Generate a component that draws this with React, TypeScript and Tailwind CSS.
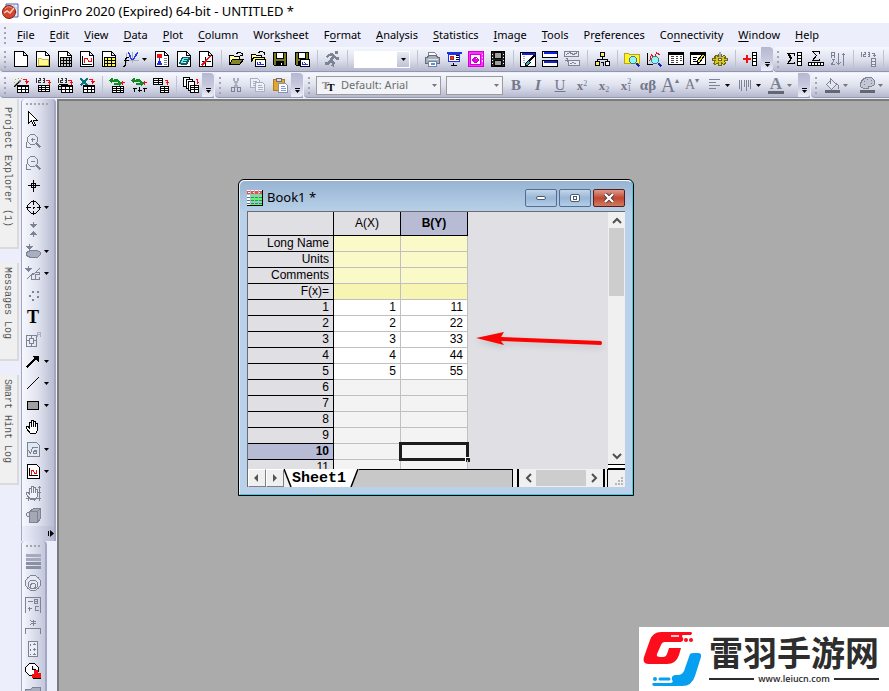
import { ReactNode } from "react";

// [path, stroke, fill, stroke width]
type Shape = [string, string, string?, number?];

const K = "#000000";
const G = "#7d8294";
const L = "#a9afbf";
const R = "#f01010";

const page: Shape = ["M1 0H10L14 4V15H1Z M10 0V4H14", K, "#ffffff"];
const redArrow: Shape = ["M9 2H13V6 M11 4H15 M12 5H14", R];
const grid: Shape = ["M4 8H15V15H4Z M4 9H15 M4 12H15 M8 8V15 M12 8V15", K, "#ffffff"];
const digits: Shape = ["M0 1H1V5 M3 1H5V3H3V5H5 M7 1H9V5H7 M7 3H9", "#333333"];
const recycle: Shape[] = [
  ["M1 3H9 M3 1L1 3L3 5 M4 2H8 M4 6H11 M9 4L11 6L9 8", "#118a22", "none", 2],
];
const lens: Shape[] = [
  ["M7 5H10L12 7V10L10 12H7L5 10V7Z", "#38808c", "#8ef4f8"],
  ["M12 12L15 15", "#1020b0", "none", 2],
];
const floppy: Shape[] = [
  ["M1 1H14V14H2L1 13Z", K, "#777722"],
  ["M4 1H11V7H4Z", K, "#ffffff"],
  ["M4 10H11V14H4Z M5 11H8V13H5Z", K, K],
  ["M9 11V13", "#ffffff"],
];
const hand = "M5 14L1 9V7H3L4 9V3H6V7V1H8V7V2H10V7V4H12V11L10 14Z";

const icons: Record<string, Shape[]> = {
  Project: [page],
  Folder: [page, ["M3 7H6L7 8H13V14H3Z", "#c9b93c", "#fff890"]],
  Workbook: [page, ["M3 6H14V15H3Z M3 9H14 M3 12H14 M6 6V15 M9 6V15 M12 6V15", K, "#c6c6c6"]],
  Graph: [page, ["M3 4V13H12 M2 7H3 M2 10H3", K], ["M5 11V7H8L9 10H12V6", R]],
  Matrix: [page, ["M3 6H14V15H3Z M3 9H14 M3 12H14 M6 6V15 M10 6V15", K, "#fff64a"]],
  Function: [
    ["M3 1V11 M9 0V11 M1 9H15", L],
    ["M5 1L8 8H10L14 1", "#2438e8", "none", 1.5],
    ["M5 6H3L2 8V14L0 15 M0 9H5", K, "none", 1.5],
  ],
  Layout: [
    page,
    ["M3 3H7V6H3Z", R, R],
    ["M3 13L5 8L7 13Z", "#2030d8", "#2030d8"],
    ["M9 7H12 M9 9H12 M9 11H12 M9 13H12", G],
  ],
  Notes: [page, ["M3 12L6 6H13L10 12Z M4 13H10L13 8", "#0b5d66", "#6deaee"], ["M7 8H11 M6 10H10", "#0b5d66"]],
  "Function plot": [page, ["M3 10H12 M7 5V14", K], ["M3 14L6 11L8 9L12 4", R, "none", 1.5]],
  Open: [
    ["M1 13V4H5L6 5H11V8", K, "#ffffa0"],
    ["M1 13L4 8H15L11 13Z", K, "#85852a"],
    ["M8 2L10 1H12L14 3 M14 1V4H11", K],
  ],
  "Open template": [
    ["M1 10V3H5L6 4H11V7", K, "#ffffa0"],
    ["M8 1L10 0H12L14 2 M14 0V3", K],
    ["M1 10L3 6H14V9", K, "#ffff50"],
    ["M5 8H15V15H5Z", K, "#ffffff"],
    ["M7 10V13H13 M9 11L11 12", "#2030e0"],
  ],
  Save: floppy,
  "Save template": [...floppy, ["M6 8H15V15H6Z", K, "#ffffff"], ["M8 10V13H13 M10 11L12 13", "#2030e0"]],
  Run: [
    ["M11 0H13V2H11Z", G, G],
    ["M5 3H8L10 5L12 7H14 M9 5L6 9L9 11L8 15 M6 9L4 12H0 M5 3L2 6", G, "none", 2.5],
  ],
  Print: [
    ["M4 5V1H10L12 3V5", G, "#ffffff"],
    ["M1 6H3L4 4H12L13 6H15V12H1Z", "#686d7b", "#a9aebb"],
    ["M3 8H13", "#dfe2ea"],
    ["M4 10H12V15H4Z", G, "#ffffff"],
    ["M6 12H10", "#399cf0", "none", 2],
  ],
  Slides: [
    ["M0 1H15", "#2030e8", "none", 2],
    ["M2 3H13V10H2Z", "#2030e8", "#ffffff"],
    ["M4 5H7V8H4Z", R, "#16a832"],
    ["M9 4H12 M9 6H12 M9 8H12 M7 11V14 M4 14H10", K],
  ],
  Digitizer: [
    ["M0 0H15V15H0Z", "#d200d2", "#ff30ff"],
    ["M2 3H12V13H2Z", "#d200d2", "#ffffff"],
    ["M6 6H8L10 8V9L8 11H6L4 9V8Z", "#c000c0", "#e800e8"],
    ["M7 7H8", "#ffffff"],
    ["M14 2V3 M14 5V6 M14 8V10", "#ffffff"],
  ],
  Video: [
    ["M1 0H14V15H1Z", K, "#222222"],
    ["M4 1H11V7H4Z M4 9H11V14H4Z", K, "#a0a0a0"],
    ["M2 2V3 M2 5V6 M2 8V9 M2 11V12 M13 2V3 M13 5V6 M13 8V9 M13 11V12", "#ffffff"],
  ],
  "Code builder": [
    ["M0 1H15V15H0Z", K, "#ffffff"],
    ["M1 2H14", "#1020e0", "none", 2],
    ["M2 5H4 M2 7H4 M2 9H4 M2 11H4", L],
    ["M14 4L8 10", K, "none", 2],
    ["M8 9L5 12V14H7L10 11Z", K, "#20b0b8"],
  ],
  Windows: [
    ["M0 0H15V6H0Z M0 9H15V15H0Z", K, "#ffffff"],
    ["M1 1H14 M1 10H14", "#1020e0", "none", 2],
  ],
  Duplicate: [
    ["M0 0H14V5H0Z M4 9H15V14H4Z M0 9H3", G, "#e8ebf4"],
    ["M2 3L5 1L9 3L13 1 M6 12L9 11L12 13 M1 7H3V10", G],
  ],
  Explorer: [
    ["M6 1H10V5H6Z", K, "#ffee60"],
    ["M8 5V8 M3 10V8H13V10 M1 10H5V14H1Z M11 10H15V14H11Z M6 11H9V14", K],
    ["M2 11H4V13H2Z", "#ffee60", "#ffee60"],
    ["M12 11H14V13H12Z", "#ffffff", "#ffffff"],
  ],
  "Zoom project": [["M0 2H4L5 3H15V12H0Z", "#b6a41c", "#fff42c"], ...lens],
  "Zoom graph": [["M1 1V13H6 M0 4H1 M0 7H1 M0 10H1", K], ["M3 10L5 3L8 7L10 1L14 4", R], ...lens],
  Results: [
    ["M0 1H15V13H0Z", K, "#ffffff"],
    ["M0 2H15", K, "none", 2],
    ["M2 5H5 M7 5H9 M11 5H13 M2 7H5 M7 7H9 M11 7H13 M2 9H5 M7 9H9 M11 9H13 M2 11H5 M7 11H9", "#444444"],
  ],
  Script: [
    ["M0 1H15V13H0Z", K, "#ffffff"],
    ["M0 2H15", K, "none", 2],
    ["M2 6H6 M2 8H5 M2 10H6", K],
    ["M13 4L8 10", "#f4e020", "none", 3],
    ["M12 3L7 9V12L9 11L14 4", K],
  ],
  Options: [
    ["M6 3H9V5L12 4L13 5L12 7H15V9H12L13 12L11 13L9 11V14H6V11L3 13L1 12L3 9H0V7H3L2 5L4 4L6 5Z", "#6e6718", "#d8c820"],
    ["M6 7H9V9H6Z", "#6e6718", "#ffffff"],
    ["M7 0V6", "#a8acb8", "none", 2],
  ],
  "Add column": [["M0 7H8 M4 3V11", R, "none", 2], ["M10 1H14V14H10Z M10 4H14 M10 7H14 M10 10H14", K, "#ffffff"]],
  "Column statistics": [
    ["M8 4V2H1L5 7L1 12H8V10", K],
    ["M2 3L5 7", K, "none", 2],
    ["M11 1H15V14H11Z M11 4H15 M11 7H15 M11 10H15", K, "#ffffff"],
  ],
  "Row statistics": [
    ["M11 2V0H4L8 4L4 9H11V7 M5 1L8 4", K],
    ["M0 11H15V14H0Z M3 11V14 M6 11V14 M9 11V14 M12 11V14", K, "#ffffff"],
  ],
  Sort: [
    ["M1 6V1H4V6 M1 4H4 M1 8H4L1 13H4 M8 1V13 M6 11L8 13L10 11 M13 14V2 M11 4L13 2L15 4", G],
  ],
  "Set values": [
    ["M0 1H1V5 M3 1H5V3H3V5H5 M7 1H9V5H7 M7 3H9 M11 2H14V5 M12 4H15", G],
    ["M11 7H15V15H11Z M11 10H15 M11 13H15", G, "#e8ebf4"],
  ],
  "Import wizard": [
    ["M1 9L7 3", "#777777", "none", 2],
    ["M5 0V1 M2 2L3 3 M8 1L7 2 M3 5H4 M0 5H1", "#cba800"],
    ["M0 10L5 5", K],
    redArrow,
    grid,
  ],
  "Import single ASCII": [digits, ["M10 3H14V7 M12 5H15", R], ["M3 8H14V14H3Z M3 10H14 M3 12H14 M6 8V14 M10 8V14", K, "#ffffff"]],
  "Import multiple ASCII": [digits, ["M10 3H14V7 M12 5H15", R], ["M1 7H10V12 M1 7V12H4 M1 9H5", K], grid],
  "Import Excel": [["M1 1L8 8 M8 1L1 8", "#087878", "none", 2.5], redArrow, grid],
  Reimport: [...recycle, ["M13 3V7 M11 5H15", R], ["M3 9H14V15H3Z M3 11H14 M3 13H14 M7 9V15 M11 9V15", K, "#ffffff"]],
  "Reimport all": [...recycle, ["M13 3V7 M11 5H15", R], ["M3 14V10 M1 11H5 M8 9V14 M6 13H10 M13 14V10 M11 11H15", K]],
  Transpose: [
    ["M0 1H9V7H0Z M0 3H9 M0 5H9 M5 1V7", K, "#ffffff"],
    ["M11 3H14V7 M12 5H15", R],
    ["M7 9H15V15H7Z M7 11H15 M7 13H15 M11 9V15", K, "#ffffff"],
  ],
  Batch: [
    ["M0 0H6V9H0Z", K, "#ffffff"],
    ["M3 2H9V11H3Z", K, "#ffffff"],
    ["M5 4H11V13H5Z", K, "#ffffff"],
    ["M12 2H14V6 M13 5H15", R],
    ["M7 8H15V15H7Z M7 10H15 M7 12H15 M11 8V15", K, "#ffffff"],
  ],
  Cut: [["M5 1L9 10 M10 1L6 10", L, "none", 2], ["M3 10H6V14H3Z M9 10H12V14H9Z", G, "none", 1.5]],
  Copy: [
    ["M0 1H7L9 3V10H0Z M2 4H6 M2 6H7 M2 8H7", L, "#eef1fa"],
    ["M5 5H12L14 7V14H5Z M7 8H11 M7 10H12 M7 12H12", L, "#eef1fa"],
  ],
  Paste: [
    ["M1 2H12V13H1Z", "#b07a18", "#e0a832"],
    ["M4 1H9V4H4Z", "#6e6e78", "#d8d8e0"],
    ["M6 6H13L15 8V15H6Z", "#8892b0", "#ffffff"],
    ["M8 9H12 M8 11H13 M8 13H13", "#7f9bd0"],
  ],
  Align: [["M2 2H13 M2 5H9 M2 8H13 M2 11H9", G]],
  "Line spacing": [["M2 2V11 M4 2V13 M7 2V9 M9 2V13 M11 2V9 M13 2V11", G]],
  Fill: [["M2 7L7 2L12 7L7 12Z M6 0V6", G, "#e3e6ef"], ["M12 6L14 8V11", G], ["M0 14H15", "#63676f", "none", 3]],
  Palette: [
    ["M1 6L3 2L7 0H12L15 3V7L12 9H9V11H4L1 9Z", G, "#c3c7d3"],
    ["M4 4H5 M7 2H8 M11 3H12 M4 7H5 M11 6H12", G],
    ["M0 14H15", "#63676f", "none", 3],
  ],
  Pointer: [["M3 0V12L6 9L8 14H10L8 9H12Z", K, "#ffffff"]],
  "Zoom in": [["M5 1H9L12 4V8L9 11H5L2 8V4Z M5 6H9 M7 4V8 M1 8V14H5", G], ["M11 10L15 14", G, "none", 2]],
  "Zoom out": [["M5 1H9L12 4V8L9 11H5L2 8V4Z M5 6H9 M1 8V14H5", G], ["M11 10L15 14", G, "none", 2]],
  "Screen reader": [["M8 2V14 M2 8H14 M6 6H10V10H6Z", K]],
  "Data reader": [["M6 2H10L14 6V10L10 14H6L2 10V6Z M8 0V5 M8 11V15 M0 8H5 M11 8H15 M7 8H9 M8 7V9", K]],
  "Data selector": [["M8 0V4 M8 12V16", G], ["M5 3H11L8 6Z M5 13H11L8 10Z", G, G]],
  "Mask range": [["M4 0V3", G], ["M1 3H7L4 6Z", G, G], ["M5 7H12L15 9V11L12 14H5L1 12V9Z", G, L]],
  "Mask points": [["M3 0V5 M1 14L5 10L9 8L14 3 M6 8H9 M6 8V14H9 M10 7H14V9H10V14H14V11", G], ["M0 3H6L3 6Z", G, G]],
  "Draw data": [["M6 4H8 M11 4H13 M3 8H5 M11 9H13 M6 12H8", G, "none", 2]],
  Annotation: [
    ["M1 4H11V15H1Z M1 9H4 M8 9H11 M6 4V7 M6 12V15 M4 7V12H8V7Z", G],
    ["M12 5V1H15V5 M12 3H15", L],
  ],
  Arrow: [["M1 14L11 4", K, "none", 2], ["M8 3H13V8Z", K, K]],
  Line: [["M1 14L13 2", K, "none", 1.4]],
  Rectangle: [["M2 4H13V12H2Z", K, "#a0a0a0"]],
  Pan: [[hand, K, "#ffffff"]],
  Equation: [["M2 1H11L14 4V15H2Z", G, "#dfe7f1"], ["M3 9L5 12L7 6H12 M8 9H11V12H8V10H11", G]],
  "New graph": [["M2 1H11L14 4V15H2Z", K, "#ffffff"], ["M4 4V12H12 M3 7H4 M3 10H4", K], ["M6 11V7H8L9 10H11V6", R]],
  Rescale: [[hand, G, "#f0f2f8"], ["M14 0V15 M12 2H15 M12 7H15 M0 13H15 M3 12V15 M9 12V15", G]],
  Rotate: [["M4 4L8 1H15V11L12 15H4Z", G, "#a3a8b5"], ["M4 4H12V15 M12 4L15 1", G], ["M1 6L4 4V10L1 8Z", G, "#dfe2ea"]],
  Layers: [["M0 2H15 M0 6H15", "#a4aabc", "none", 3], ["M0 10H15 M0 14H15", "#8b91a5", "none", 3]],
  Radial: [
    ["M0 7.5A7.5 7.5 0 1 1 15 7.5A7.5 7.5 0 1 1 0 7.5Z", G, "#e4e9f2"],
    ["M3 9A4.5 4.5 0 1 1 12 9A4.5 4.5 0 1 1 3 9Z", G],
    ["M5 10.5A2.5 2.5 0 1 1 10 10.5A2.5 2.5 0 1 1 5 10.5Z", G],
  ],
  Legend: [["M0 15V0H15V15 M2 4H7 M2 11H6 M4 9V13 M9 2H12V6H9Z M9 4H12 M13 9H10V13H13", G]],
  Bracket: [["M0 14V9H15V14 M8 0V6 M5 1L11 5 M5 5L11 1", G]],
  Scale: [["M3 0H12V15H3Z M5 2V4 M5 7V9 M5 12V13 M7 3H10 M7 8H10 M7 13H10 M9 1V3 M9 6V9 M9 11V13", G, "#eceff7"]],
  Timestamp: [
    ["M4 0H9L13 4V8L9 12H4L0 8V4Z M7 2V6H10", K, "#ffffff"],
    ["M9 7H12V10H15V14H7V11H9Z", R, R],
    ["M7 15H15", K],
  ],
  "Open folder": [["M0 4H5L7 2H15V14H0Z", G, L]],
};

function Icon({ name }: { name: string }) {
  return (
    <svg className="size-4 shrink-0" viewBox="0 0 16 16" shapeRendering="crispEdges" aria-hidden="true">
      <g transform="translate(.5 .5)">
        {icons[name].map(([d, stroke, fill = "none", width = 1], i) => (
          <path key={i} d={d} stroke={stroke} fill={fill} strokeWidth={width} />
        ))}
      </g>
    </svg>
  );
}

function Tool({ name, children }: { name: string; children?: ReactNode }) {
  return (
    <button aria-label={name} className="flex h-[22px] w-[22px] shrink-0 items-center justify-center">
      {children ?? <Icon name={name} />}
    </button>
  );
}

function Tools({ names }: { names: string[] }) {
  return (
    <>
      {names.map((name) => (
        <Tool key={name} name={name} />
      ))}
    </>
  );
}

function Caret({ color = "#000000" }: { color?: string }) {
  return (
    <svg className="h-[3px] w-[5px] shrink-0" viewBox="0 0 5 3" aria-hidden="true">
      <path d="M0 0H5L2.5 3Z" fill={color} />
    </svg>
  );
}

function Drop({ color }: { color?: string }) {
  return (
    <button aria-label="More" className="flex h-[22px] w-[9px] shrink-0 items-center">
      <Caret color={color} />
    </button>
  );
}

function Sep() {
  return (
    <div className="flex w-2 shrink-0 justify-center">
      <div className="h-[18px] w-px bg-[#bfc2d2]" />
    </div>
  );
}

function Grip() {
  return (
    <div className="flex w-2.5 shrink-0 flex-col items-center gap-[3px]">
      {[0, 1, 2, 3].map((i) => (
        <i key={i} className="size-[2px] bg-[#a2a4b0]" />
      ))}
    </div>
  );
}

function Bar({ children, end = true, grow = false }: { children: ReactNode; end?: boolean; grow?: boolean }) {
  return (
    <div
      className={
        "flex h-[25px] shrink-0 items-center rounded-l-sm border-b border-[#9496ab] bg-linear-to-b from-[#f5f8fe] via-[#e0e3ee] to-[#b6b9cf]" +
        (grow ? " flex-1" : "")
      }
    >
      <Grip />
      {children}
      {end && (
        <button
          aria-label="Toolbar options"
          className="flex h-[24px] w-3 flex-col items-center justify-end gap-px rounded-r-sm bg-linear-to-b from-[#b4b7cf] via-[#c6c9dd] to-[#eceefa] pb-1"
        >
          <span className="h-px w-[5px] bg-black" />
          <Caret />
        </button>
      )}
    </div>
  );
}

const menus: [string, number][] = [
  ["File", 0], ["Edit", 0], ["View", 0], ["Data", 0], ["Plot", 0], ["Column", 0],
  ["Worksheet", 3], ["Format", 1], ["Analysis", 0], ["Statistics", 0], ["Image", 0],
  ["Tools", 0], ["Preferences", 2], ["Connectivity", 2], ["Window", 0], ["Help", 0],
];

function TitleBar() {
  return (
    <header className="flex h-[23px] shrink-0 items-center gap-1 bg-white pl-0.5">
      <svg className="size-[17px]" viewBox="0 0 17 17" aria-hidden="true">
        <path d="M4 1H16V14H4Z" fill="#e8eefc" stroke="#5060a8" />
        <path d="M8 1V14M12 1V14M4 5H16M4 9H16" stroke="#a9b4dc" />
        <circle cx="7" cy="9" r="6.5" fill="#d8452e" stroke="#7c2018" />
        <path d="M2 10L5 8L8 10L12 5" fill="none" stroke="#ffd0c0" strokeWidth="1.5" />
        <path d="M3 6Q6 2 10 5" fill="none" stroke="#f09a84" />
      </svg>
      <h1 className="text-[13px] whitespace-nowrap">OriginPro 2020 (Expired) 64-bit - UNTITLED *</h1>
    </header>
  );
}

function MenuBar() {
  return (
    <nav className="flex h-6 shrink-0 items-center">
      <Grip />
      <div className="flex gap-[15px] pl-[7px]">
        {menus.map(([label, key]) => (
          <button key={label} className="text-[11px] leading-4 whitespace-nowrap">
            {label.slice(0, key)}
            <u className="underline-offset-2">{label[key]}</u>
            {label.slice(key + 1)}
          </button>
        ))}
      </div>
    </nav>
  );
}

function MainToolbar() {
  return (
    <div className="flex h-[26px] shrink-0">
      <Bar>
        <Tools names={["Project", "Folder", "Workbook", "Graph", "Matrix", "Function"]} />
        <Drop />
        <Tools names={["Layout", "Notes", "Function plot"]} />
        <Sep />
        <Tools names={["Open", "Open template", "Save", "Save template"]} />
        <Sep />
        <Tool name="Run" />
        <Sep />
        <div className="relative mx-[3px] flex w-14 items-center">
          <select aria-label="Zoom level" className="h-[17px] w-full appearance-none border border-white bg-white">
            <option></option>
          </select>
          <span className="pointer-events-none absolute top-px right-px flex h-[15px] w-3 items-center justify-center bg-linear-to-b from-[#e8eaf3] to-[#bfc3d6]">
            <Caret />
          </span>
        </div>
        <Sep />
        <Tools names={["Print", "Slides", "Digitizer", "Video"]} />
        <Sep />
        <Tools names={["Code builder", "Windows", "Duplicate"]} />
        <Sep />
        <Tool name="Explorer" />
        <Sep />
        <Tools names={["Zoom project", "Zoom graph", "Results", "Script", "Options"]} />
        <Sep />
        <Tool name="Add column" />
      </Bar>
      <Bar end={false} grow>
        <Tools names={["Column statistics", "Row statistics", "Sort"]} />
        <Sep />
        <Tool name="Set values" />
        <Sep />
      </Bar>
    </div>
  );
}

function FormatToolbar() {
  return (
    <div className="flex h-[26px] shrink-0 gap-px">
      <Bar>
        <Tools names={["Import wizard", "Import single ASCII", "Import multiple ASCII", "Import Excel"]} />
        <Sep />
        <Tools names={["Reimport", "Reimport all", "Transpose"]} />
        <Sep />
        <Tool name="Batch" />
      </Bar>
      <Bar>
        <Tools names={["Cut", "Copy", "Paste"]} />
      </Bar>
      <Bar>
        <div className="relative ml-0.5 w-[125px]">
          <select
            aria-label="Font"
            className="block h-[19px] w-full appearance-none border border-[#9b9b9b] bg-[#f1f3f8] pl-6 text-[11px] leading-4 text-[#6d6d6d]"
          >
            <option>Default: Arial</option>
          </select>
          <span className="pointer-events-none absolute inset-y-0 left-1.5 flex items-center font-['Liberation_Serif',serif] text-[11px] font-bold">
            <span className="text-[#888888]">T</span>
            <span className="-ml-0.5 pt-1">T</span>
          </span>
          <span className="pointer-events-none absolute inset-y-0 right-1 flex items-center">
            <Caret color="#777777" />
          </span>
        </div>
        <div className="relative mr-0.5 ml-[5px] w-[57px]">
          <select aria-label="Font size" className="block h-[19px] w-full appearance-none border border-[#9b9b9b] bg-[#f1f3f8]">
            <option></option>
          </select>
          <span className="pointer-events-none absolute inset-y-0 right-1 flex items-center">
            <Caret color="#777777" />
          </span>
        </div>
        <div className="flex font-['Liberation_Serif',serif] text-[#74788a]">
          <Tool name="Bold"><b className="text-[15px]">B</b></Tool>
          <Tool name="Italic"><b className="text-[15px] italic">I</b></Tool>
          <Tool name="Underline"><span className="text-[15px] underline">U</span></Tool>
          <Tool name="Superscript"><b className="text-[13px] leading-none">x<sup className="text-[8px] font-normal">2</sup></b></Tool>
          <Tool name="Subscript"><b className="text-[13px] leading-none">x<sub className="text-[8px] font-normal">2</sub></b></Tool>
          <Tool name="Super and subscript">
            <b className="text-[13px] leading-none">x</b>
            <span className="flex flex-col text-[8px] leading-[7px]"><span>2</span><span>1</span></span>
          </Tool>
          <Tool name="Greek"><b className="text-[15px]">αβ</b></Tool>
          <Tool name="Increase font"><span className="text-[20px] leading-none">A</span><sup className="text-[8px]">▴</sup></Tool>
          <Tool name="Decrease font"><span className="text-[14px] leading-none">A</span><sup className="text-[8px]">▾</sup></Tool>
        </div>
        <Tool name="Align" />
        <Drop />
        <Tool name="Line spacing" />
        <Drop />
        <Tool name="Font color">
          <b className="h-[17px] w-4 border-b-3 border-[#63676f] text-center font-['Liberation_Serif',serif] text-[17px] leading-[14px] text-[#7d8294]">
            A
          </b>
        </Tool>
        <Drop color="#777777" />
        <div className="w-0.5" />
      </Bar>
      <Bar end={false} grow>
        <Tool name="Fill" />
        <Drop color="#777777" />
        <div className="w-1" />
        <Tool name="Palette" />
        <Drop color="#777777" />
      </Bar>
    </div>
  );
}

const withMenu = ["Data reader", "Mask range", "Mask points", "Arrow", "Line", "Rectangle", "Equation", "New graph"];
const sideTools = [
  "Pointer", "Zoom in", "Zoom out", "Screen reader", "Data reader", "Data selector", "Mask range",
  "Mask points", "Draw data", "Text", "Annotation", "Arrow", "Line", "Rectangle", "Pan", "Equation",
  "New graph", "Rescale", "Rotate",
];
const lowerTools = ["Layers", "Radial", "Legend", "Bracket", "Scale", "Timestamp", "Open folder"];

function SideGrip({ dots }: { dots: number }) {
  return (
    <div className="flex h-[9px] shrink-0 items-center gap-[2px] pl-1">
      {Array.from({ length: dots }, (_, i) => (
        <i key={i} className="size-[2px] bg-[#a2a4b0]" />
      ))}
    </div>
  );
}

function SideBar() {
  return (
    <aside className="flex w-[57px] shrink-0 gap-0.5 overflow-hidden">
      <div className="flex w-[19px] flex-col gap-3.5 font-['Liberation_Mono',monospace] text-[10px] leading-3 text-[#555555]">
        {["Project Explorer (1)", "Messages Log", "Smart Hint Log"].map((label, i) => (
          <button
            key={label}
            className={
              "flex justify-start border-r-2 border-b-2 border-[#dadada] bg-[#f0f0f0] pr-1 text-left whitespace-nowrap [writing-mode:vertical-rl] " +
              (i === 0 ? "pt-2 pb-5" : "pt-1 pb-5")
            }
          >
            {label}
          </button>
        ))}
      </div>
      <div className="flex flex-col">
        <div className="flex w-[35px] flex-col rounded-t-sm border-r-2 border-l border-r-[#a3a7c2] border-l-[#a3a7c2] bg-linear-to-r from-[#f5f8fe] via-[#e0e3ee] to-[#b9bcd2]">
          <SideGrip dots={6} />
          {sideTools.map((name) => (
            <div key={name} className="flex">
              <Tool name={name}>
                {name === "Text" ? <span className="font-['Liberation_Serif',serif] text-[18px] font-bold">T</span> : undefined}
              </Tool>
              {withMenu.includes(name) && <Drop />}
            </div>
          ))}
          <button
            aria-label="Toolbar options"
            className="flex h-[15px] items-center justify-end gap-px rounded-b-sm bg-linear-to-r from-[#eceefa] via-[#d2d5e6] to-[#b4b7cf]"
          >
            <span className="h-[5px] w-px bg-black" />
            <svg className="h-[7px] w-1" viewBox="0 0 4 7" aria-hidden="true">
              <path d="M0 0L4 3.5L0 7Z" />
            </svg>
          </button>
        </div>
        <div className="flex w-[26px] flex-1 flex-col rounded-t-sm border-r-2 border-l border-r-[#a3a7c2] border-l-[#a3a7c2] bg-linear-to-r from-[#f5f8fe] to-[#c4c7da]">
          <SideGrip dots={4} />
          <Tools names={lowerTools} />
        </div>
      </div>
    </aside>
  );
}

const labelRows = ["Long Name", "Units", "Comments", "F(x)="];
const values = [[1, 11], [2, 22], [3, 33], [4, 44], [5, 55]];

function Worksheet() {
  const cell = "h-4 border-r border-b border-[#c0c0c0] pr-1 text-right";
  const head = "h-4 border-r border-b border-black pr-1 text-right";
  return (
    <table className="w-[220px] table-fixed border-separate border-spacing-0 text-[12px] leading-[15px]">
      <colgroup>
        <col className="w-[86px]" />
        <col className="w-[67px]" />
        <col className="w-[67px]" />
      </colgroup>
      <thead>
        <tr>
          <td className="h-6 border-r border-b border-black" />
          <th className="border-r border-b border-black font-normal">A(X)</th>
          <th className="border-r border-b border-black bg-[#b7bcd4]">B(Y)</th>
        </tr>
      </thead>
      <tbody>
        {labelRows.map((label, i) => (
          <tr key={label} className={i === 3 ? "bg-[#f7f5b1]" : "bg-[#fafac8]"}>
            <th className={head + " bg-[#e0dfe4] font-normal"}>{label}</th>
            <td className={cell} />
            <td className={cell} />
          </tr>
        ))}
        {Array.from({ length: 11 }, (_, i) => (
          <tr key={i} className={values[i] ? "bg-white" : "bg-[#f3f3f3]"}>
            <th className={head + (i === 9 ? " bg-[#b7bcd4] font-bold" : " bg-[#e0dfe4] font-normal")}>{i + 1}</th>
            <td className={cell}>{values[i]?.[0]}</td>
            <td className={cell + " relative"}>
              {values[i]?.[1]}
              {i === 9 && (
                <span className="absolute -inset-x-0.5 -inset-y-0.5 border-3 border-[#1c1c1c]">
                  <span className="absolute -right-1 -bottom-1 size-[5px] border-t border-l border-white bg-[#1c1c1c]" />
                </span>
              )}
            </td>
          </tr>
        ))}
      </tbody>
    </table>
  );
}

function Chevron({ d }: { d: string }) {
  return (
    <svg className="size-4 shrink-0" viewBox="0 0 16 16" aria-hidden="true">
      <path d={d} fill="none" stroke="#505050" strokeWidth="2" />
    </svg>
  );
}

function SheetBar() {
  return (
    <div className="flex h-[18px] shrink-0 bg-[#f0f0f0]">
      {["M9 4V12L5 8Z", "M6 4V12L10 8Z"].map((d, i) => (
        <button
          key={d}
          aria-label={i ? "Next sheet" : "Previous sheet"}
          className="flex w-[18px] items-center justify-center border border-t-white border-r-[#808080] border-b-[#808080] border-l-white bg-[#f0f0f0]"
        >
          <svg className="size-4" viewBox="0 0 16 16" aria-hidden="true">
            <path d={d} fill="#555555" />
          </svg>
        </button>
      ))}
      <div className="flex flex-1 bg-[#c8c8c8]">
        <button className="flex items-center bg-white font-['Liberation_Mono',monospace] text-[15px] leading-none font-bold">
          <svg className="h-[18px] w-2" viewBox="0 0 8 18" aria-hidden="true">
            <path d="M0 0V18H8Z" fill="#f0f0f0" />
            <path d="M0 0L7 18" stroke="#000" strokeWidth="1.5" />
          </svg>
          Sheet1
          <svg className="ml-1 h-[18px] w-[9px]" viewBox="0 0 9 18" aria-hidden="true">
            <path d="M9 0V18H1Z" fill="#c8c8c8" />
            <path d="M8 0L1 18" stroke="#000" strokeWidth="1.5" />
          </svg>
        </button>
        <div className="flex-1 border-t border-r border-black" />
      </div>
      <div className="ml-1 flex w-[88px] items-center justify-center border-x-2 border-black bg-[#f0f0f0]">
        <button aria-label="Scroll left"><Chevron d="M11 4L7 8L11 12" /></button>
        <div className="h-4 w-[50px] bg-[#cdcdcd]" />
        <button aria-label="Scroll right"><Chevron d="M6 4L10 8L6 12" /></button>
      </div>
      <div className="ml-0.5 flex w-[18px] items-end justify-end border-t border-l border-black p-0.5">
        <svg className="size-2" viewBox="0 0 8 8" aria-hidden="true">
          <path d="M6 0h2v2h-2zM3 3h2v2h-2zM6 3h2v2h-2zM0 6h2v2h-2zM3 6h2v2h-2zM6 6h2v2h-2z" fill="#b8b8b8" />
        </svg>
      </div>
    </div>
  );
}

function BookWindow() {
  const control = "flex h-[18px] w-8 items-center justify-center rounded-xs border";
  return (
    <section className="absolute top-[78px] left-[179px] flex h-[317px] w-[396px] flex-col rounded-t-md border border-black bg-[#b9d1ea]">
      <div className="flex min-h-0 flex-1 flex-col rounded-t-md border border-t-white border-r-[#35cfe6] border-b-[#35cfe6] border-l-[#e4eefa] bg-linear-to-b from-[#98b4d2] to-[#b9d1ea] to-10% px-[7px] pb-[7px]">
        <div className="flex h-[30px] shrink-0 items-center gap-1 pt-1">
          <svg className="size-4" viewBox="0 0 16 16" shapeRendering="crispEdges" aria-hidden="true">
            <path d="M0 0H16V16H0Z" fill="#000" />
            <path d="M0 0H15V15H0Z" fill="#fff" />
            <path d="M0 1H15V4H0Z" fill="#e05050" />
            <path d="M1 2H3M6 2H8M11 2H13" stroke="#fff" />
            <path d="M4 5H15V15H4Z" fill="#50ff60" />
            <path d="M0 7.5H15M0 10.5H15M0 13.5H15" stroke="#5070a0" />
            <path d="M0 4.5H15M3.5 0V15M7.5 0V15M11.5 0V15" stroke="#b0b8c0" />
          </svg>
          <h2 className="flex-1 text-[13px]">Book1 *</h2>
          <div className="flex gap-0.5">
            <button aria-label="Minimize" className={control + " border-[#526d8e] bg-linear-to-b from-[#c3d6ea] via-[#98b6d6] to-[#b4cde8]"}>
              <span className="h-1 w-2.5 rounded-xs border border-[#4c5a6c] bg-white" />
            </button>
            <button aria-label="Maximize" className={control + " border-[#526d8e] bg-linear-to-b from-[#c3d6ea] via-[#98b6d6] to-[#b4cde8]"}>
              <span className="flex h-2 w-2.5 items-center justify-center rounded-xs border border-[#4c5a6c] bg-white">
                <span className="h-1 w-1 border border-[#4c5a6c]" />
              </span>
            </button>
            <button aria-label="Close" className={control + " border-[#591b1b] bg-linear-to-b from-[#dc9a8c] via-[#c04630] to-[#cf7a60]"}>
              <svg className="h-2.5 w-3" viewBox="0 0 12 10" aria-hidden="true">
                <path d="M2 1L10 9M10 1L2 9" stroke="#46363c" strokeWidth="4" />
                <path d="M2 1L10 9M10 1L2 9" stroke="#fff" strokeWidth="2.4" />
              </svg>
            </button>
          </div>
        </div>
        <div className="flex min-h-0 flex-1 flex-col border-t border-l border-[#6c6c6c] bg-[#e0dfe4] font-['Liberation_Sans',sans-serif]">
          <div className="flex min-h-0 flex-1">
            <div className="min-h-0 flex-1 overflow-hidden">
              <Worksheet />
            </div>
            <div className="flex w-[17px] flex-col items-center bg-[#f0f0f0]">
              <button aria-label="Scroll up"><Chevron d="M4 11L8 7L12 11" /></button>
              <div className="h-[68px] w-[15px] bg-[#cdcdcd]" />
              <button aria-label="Scroll down" className="mt-auto"><Chevron d="M4 6L8 10L12 6" /></button>
              <div className="h-[5px] w-full border-y border-black bg-white" />
            </div>
          </div>
          <SheetBar />
        </div>
      </div>
    </section>
  );
}

function Brand() {
  return (
    <div className="absolute right-0 bottom-0 flex h-16 w-[250px] items-start gap-2 bg-white pl-1">
      <svg className="mt-1 h-14 w-[58px] shrink-0" viewBox="0 0 58 56" aria-hidden="true">
        <path
          d="M18 1H48Q50 2 48 4H40Q38 5 40 7Q41 10 38 11H22Q19 11 18 14L14 23Q13 26 17 26H20Q23 26 24 23L26 17H38L36 24Q33 33 24 33H6Q-1 33 1 26L7 9Q10 1 18 1Z"
          fill="#fb0d1b"
        />
        <path d="M28 5H36" stroke="#fff" strokeWidth="1.5" />
        <circle cx="43" cy="9" r="2" fill="#fb0d1b" />
        <circle cx="48" cy="9" r="2" fill="#fb0d1b" />
        <path
          d="M47 23Q48 22 51 22H56Q59 23 58 26L52 45Q49 55 39 55H11Q8 54 10 52H28Q31 51 29 49Q28 45 32 44H35Q39 44 41 40Z"
          fill="#079ff0"
        />
        <circle cx="12" cy="48" r="2" fill="#079ff0" />
        <path d="M17 48H26" stroke="#079ff0" strokeWidth="3" strokeLinecap="round" />
      </svg>
      <div className="flex w-[170px] flex-col pt-1.5 text-[#2d2d2d]">
        <span className="font-['Noto_Sans_CJK_SC',sans-serif] text-[34px] leading-[38px] font-bold whitespace-nowrap">雷羽手游网</span>
        <div className="flex items-center gap-1">
          <span className="h-0.5 flex-1 bg-[#2d2d2d]" />
          <a href="#" className="font-['Open_Sans',sans-serif] text-[9px] leading-4 font-semibold">www.leiucn.com</a>
          <span className="h-0.5 flex-1 bg-[#2d2d2d]" />
        </div>
      </div>
    </div>
  );
}

export default function App() {
  return (
    <div className="flex h-screen flex-col overflow-hidden bg-[#eceefb] font-['Noto_Sans',sans-serif] text-black">
      <TitleBar />
      <MenuBar />
      <MainToolbar />
      <FormatToolbar />
      <div className="flex min-h-0 flex-1">
        <SideBar />
        <main className="relative min-w-0 flex-1 overflow-hidden border-t-2 border-l-2 border-[#7b7b7b] bg-[#ababab]">
          <BookWindow />
          <svg className="absolute top-[225px] left-[410px] h-8 w-36 drop-shadow-md" viewBox="0 0 144 32" aria-hidden="true">
            <path d="M7 12L35 6L32 11L132 15Q134 17 132 19L32 15L35 19Z" fill="#fb0404" />
          </svg>
          <Brand />
        </main>
      </div>
    </div>
  );
}
